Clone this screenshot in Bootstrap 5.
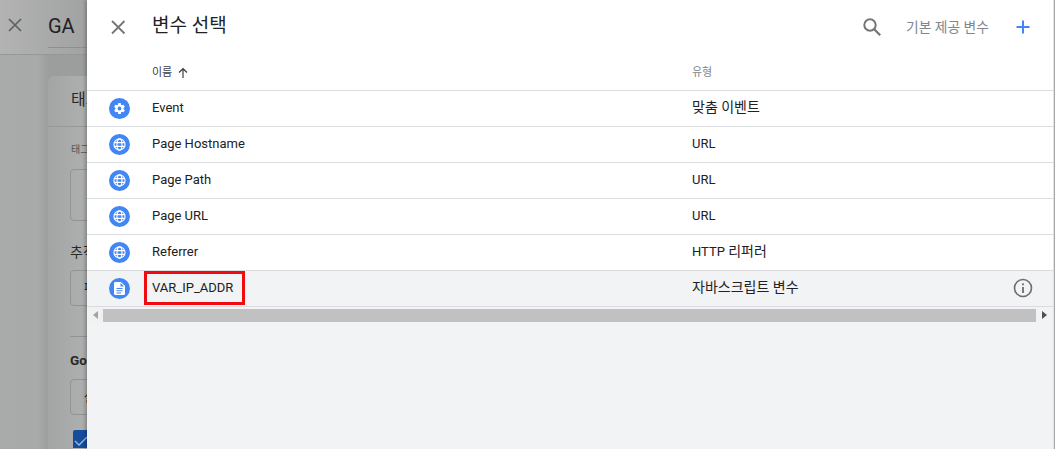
<!DOCTYPE html>
<html lang="ko">
<head>
<meta charset="UTF-8">
<title>변수 선택</title>
<link href="https://cdn.jsdelivr.net/npm/bootstrap@5.3.0/dist/css/bootstrap.min.css" rel="stylesheet">
<style>
html, body { height: 100%; overflow: hidden; }
body { font-family: Roboto, "Noto Sans CJK KR", sans-serif; background: #a8aaa9; color: #202124; font-size: 13px; }
.page-bg { width: 87px; height: 449px; overflow: hidden; background: linear-gradient(to right, #a9abaa 0, #a8aaa9 38px, #9c9e9d 48px); }
.bg-top { height: 55px; background: linear-gradient(to right, #b3b3b3, #a1a2a2); border-bottom: 1px solid #969897; padding-left: 7px; }
.bg-top svg { margin-top: 17px; }
.bg-ga { font-size: 20px; color: #202124; margin-left: 25px; height: 41px; margin-top: 7px; width: 39px; border-bottom: 1px solid #8e9090; line-height: 38px; flex: none; }
.bg-card { width: 120px; height: 373px; margin: 21px 0 0 48px; background: linear-gradient(to right, #a3a5a4, #acadad 30px); border-radius: 6px 0 0 0; }
.bg-title { height: 51px; border-bottom: 1px solid #979998; padding: 14px 0 0 23px; font-size: 16px; line-height: 20px; white-space: nowrap; color: #28292a; }
.bg-label { font-size: 10px; color: #555; padding: 16px 0 0 23px; line-height: 14px; }
.bg-box { border: 1px solid #929493; border-radius: 4px; margin-left: 22px; width: 90px; }
.box-a { height: 52px; margin-top: 12px; }
.bg-heading { font-size: 14px; padding: 22px 0 0 22px; line-height: 18px; color: #28292a; }
.box-b { height: 36px; margin-top: 9px; padding: 9px 0 0 13px; font-size: 12px; line-height: 16px; }
.bg-rule { border-top: 1px solid #929493; margin: 30px 0 0 22px; }
.bg-go { font-size: 13.500px; font-weight: 700; padding: 15px 0 0 22px; line-height: 16px; color: #28292a; white-space: nowrap; }
.box-c { height: 36px; margin-top: 11px; padding: 10px 0 0 13px; font-size: 12px; line-height: 16px; }
.bg-check { width: 16px; height: 18px; margin: 15px 0 0 25px; background: #154d9c; border-radius: 2px 0 0 0; }
.panel { position: absolute; top: 0; left: 87px; width: 967px; height: 449px; background: #f1f3f4; box-shadow: -2px 0 3px rgba(0,0,0,.22); border-right: 1px solid #e2e3e5; display: flex; flex-direction: column; }
.panel-head { height: 54px; background: #fff; padding: 0 22px 0 21px; flex: none; }
.panel-title { font-size: 19px; line-height: 26px; margin-left: 24px; padding-bottom: 2px; color: #202124; }
.builtin { font-size: 13.800px; color: #80868b; margin: 0 26px 0 24px; }
.col-name { width: 605px; padding-left: 65px; flex: none; }
.table-head { height: 37px; background: #fff; border-bottom: 1px solid #dadce0; font-size: 11px; flex: none; }
.table-head .sort-name { color: #3c4043; display: flex; align-items: center; gap: 5px; padding-top: 2px; }
.table-head .type-name { color: #80868b; padding-top: 2px; }
.var-row { height: 36px; background: #fff; border-bottom: 1px solid #dadce0; flex: none; position: relative; padding-bottom: 1px; }
.var-row.picked { background: #f1f3f4; }
.ko-text { font-size: 14px; padding-bottom: 2px; }
.ko-wrap { padding-bottom: 1px; }
.ko-part { font-size: 14px; }
.var-ico { position: absolute; left: 22px; top: 7px; width: 21px; height: 21px; border-radius: 50%; background: #4285f4; display: flex; align-items: center; justify-content: center; }
.picked-box { position: absolute; left: 57px; top: 0; width: 101px; height: 34px; border: 3px solid #f00b12; }
.info-ico { position: absolute; right: 20px; top: 7px; }
.hscroll { height: 16px; display: flex; background: #f1f3f4; flex: none; }
.hscroll-left { width: 16px; background: #f1f1f1; display: flex; align-items: center; justify-content: center; }
.hscroll-thumb { width: 933px; height: 13px; margin-top: 2px; background: #c1c1c1; }
.hscroll-right { width: 17px; display: flex; align-items: center; justify-content: center; }
</style>
</head>
<body>
<div class="page-bg">
  <div class="bg-top d-flex">
    <svg width="16" height="16" viewBox="0 0 16 16"><path d="M2 2l12 12M14 2L2 14" stroke="#5f6161" stroke-width="1.7" fill="none"/></svg>
    <div class="bg-ga">GA</div>
  </div>
  <div class="bg-card">
    <div class="bg-title">태그 구성</div>
    <div class="bg-label">태그 유형</div>
    <div class="bg-box box-a"></div>
    <div class="bg-heading">추적 유형</div>
    <div class="bg-box box-b">페이지뷰</div>
    <div class="bg-rule"></div>
    <div class="bg-go">Google 애널리틱스</div>
    <div class="bg-box box-c">설정</div>
    <div class="bg-check">
      <svg width="16" height="18" viewBox="0 0 16 18"><path d="M2 9l4 4 8-8" stroke="#9db6d8" stroke-width="1.3" fill="none"/></svg>
    </div>
  </div>
</div>

<div class="panel">
  <div class="panel-head d-flex align-items-center">
    <svg width="20" height="20" viewBox="0 0 20 20"><path d="M4 4l12.5 12.5M16.500 4L4 16.500" stroke="#757575" stroke-width="1.8" fill="none"/></svg>
    <div class="panel-title">변수 선택</div>
    <svg class="ms-auto" width="20" height="20" viewBox="0 0 20 20"><circle cx="8" cy="8" r="5.700" stroke="#757575" stroke-width="2" fill="none"/><path d="M12.200 12.200l6 6" stroke="#757575" stroke-width="2.200" fill="none"/></svg>
    <div class="builtin">기본 제공 변수</div>
    <svg width="16" height="16" viewBox="0 0 16 16"><path d="M8 1.500v13M1.500 8h13" stroke="#4285f4" stroke-width="2" fill="none"/></svg>
  </div>

  <div class="table-head d-flex align-items-center">
    <div class="col-name sort-name">이름
      <svg width="12" height="12" viewBox="0 0 12 12"><path d="M6 11V2M2 5.500L6 1.700l4 3.800" stroke="#3c4043" stroke-width="1.200" fill="none"/></svg>
    </div>
    <div class="type-name">유형</div>
  </div>

  <div class="var-row d-flex align-items-center">
    <div class="var-ico"><svg width="13" height="13" viewBox="0 0 24 24"><path fill="#fff" d="M19.400 13c.04-.3.1-.65.1-1s-.05-.7-.1-1l2.100-1.650c.2-.15.250-.4.120-.65l-2-3.450c-.12-.22-.38-.3-.6-.22l-2.500 1c-.5-.4-1.050-.7-1.700-1l-.38-2.650A.5.500 0 0 0 14 2h-4a.5.500 0 0 0-.5.420L9.150 5.070c-.6.250-1.150.6-1.700 1l-2.500-1c-.22-.08-.48 0-.6.220l-2 3.450c-.13.220-.07.500.12.650L4.600 11c-.05.3-.1.650-.1 1s.05.7.1 1l-2.100 1.650c-.2.150-.25.400-.12.650l2 3.450c.12.220.38.300.6.220l2.500-1c.5.400 1.050.7 1.700 1l.35 2.650c.04.250.25.420.5.420h4c.25 0 .46-.17.500-.42l.38-2.650c.6-.25 1.150-.6 1.700-1l2.500 1c.22.080.48 0 .6-.22l2-3.450c.13-.22.070-.5-.12-.65zM12 15.500a3.500 3.500 0 1 1 0-7 3.500 3.500 0 0 1 0 7z"/></svg></div>
    <div class="col-name">Event</div><div class="ko-text">맞춤 이벤트</div>
  </div>
  <div class="var-row d-flex align-items-center">
    <div class="var-ico"><svg width="13" height="13" viewBox="0 0 14 14"><g fill="none" stroke="#fff" stroke-width="1.200"><circle cx="7" cy="7" r="6"/><ellipse cx="7" cy="7" rx="2.700" ry="6"/><path d="M1.300 5h11.400M1.300 9h11.400"/></g></svg></div>
    <div class="col-name">Page Hostname</div><div>URL</div>
  </div>
  <div class="var-row d-flex align-items-center">
    <div class="var-ico"><svg width="13" height="13" viewBox="0 0 14 14"><g fill="none" stroke="#fff" stroke-width="1.200"><circle cx="7" cy="7" r="6"/><ellipse cx="7" cy="7" rx="2.700" ry="6"/><path d="M1.300 5h11.400M1.300 9h11.400"/></g></svg></div>
    <div class="col-name">Page Path</div><div>URL</div>
  </div>
  <div class="var-row d-flex align-items-center">
    <div class="var-ico"><svg width="13" height="13" viewBox="0 0 14 14"><g fill="none" stroke="#fff" stroke-width="1.200"><circle cx="7" cy="7" r="6"/><ellipse cx="7" cy="7" rx="2.700" ry="6"/><path d="M1.300 5h11.400M1.300 9h11.400"/></g></svg></div>
    <div class="col-name">Page URL</div><div>URL</div>
  </div>
  <div class="var-row d-flex align-items-center">
    <div class="var-ico"><svg width="13" height="13" viewBox="0 0 14 14"><g fill="none" stroke="#fff" stroke-width="1.200"><circle cx="7" cy="7" r="6"/><ellipse cx="7" cy="7" rx="2.700" ry="6"/><path d="M1.300 5h11.400M1.300 9h11.400"/></g></svg></div>
    <div class="col-name">Referrer</div><div class="ko-wrap">HTTP <span class="ko-part">리퍼러</span></div>
  </div>
  <div class="var-row picked d-flex align-items-center">
    <div class="var-ico"><svg width="11" height="13" viewBox="0 0 11 13"><path fill="#fff" fill-rule="evenodd" d="M1.200 0H7l4 4v7.800c0 .7-.5 1.200-1.200 1.200H1.200C.5 13 0 12.500 0 11.800V1.200C0 .5.500 0 1.200 0zM2.500 6v1h6V6zm0 2.200v1h6v-1zm0 2.200v1h4.500v-1zM6.500 1v3.500H10z"/></svg></div>
    <div class="col-name">VAR_IP_ADDR</div><div class="ko-text">자바스크립트 변수</div>
    <div class="picked-box"></div>
    <svg class="info-ico" width="20" height="20" viewBox="0 0 20 20"><circle cx="10" cy="10" r="8.500" stroke="#6b6d70" stroke-width="1.600" fill="none"/><path d="M10 9v6" stroke="#6b6d70" stroke-width="1.800"/><circle cx="10" cy="6.300" r="1.100" fill="#6b6d70"/></svg>
  </div>

  <div class="hscroll">
    <div class="hscroll-left"><svg width="5" height="8" viewBox="0 0 5 8"><path d="M5 0v8L0 4z" fill="#a3a3a3"/></svg></div>
    <div class="hscroll-thumb"></div>
    <div class="hscroll-right"><svg width="5" height="8" viewBox="0 0 5 8"><path d="M0 0v8l5-4z" fill="#505050"/></svg></div>
  </div>
</div>
<script src="https://cdn.jsdelivr.net/npm/bootstrap@5.3.0/dist/js/bootstrap.bundle.min.js"></script>
</body>
</html>
